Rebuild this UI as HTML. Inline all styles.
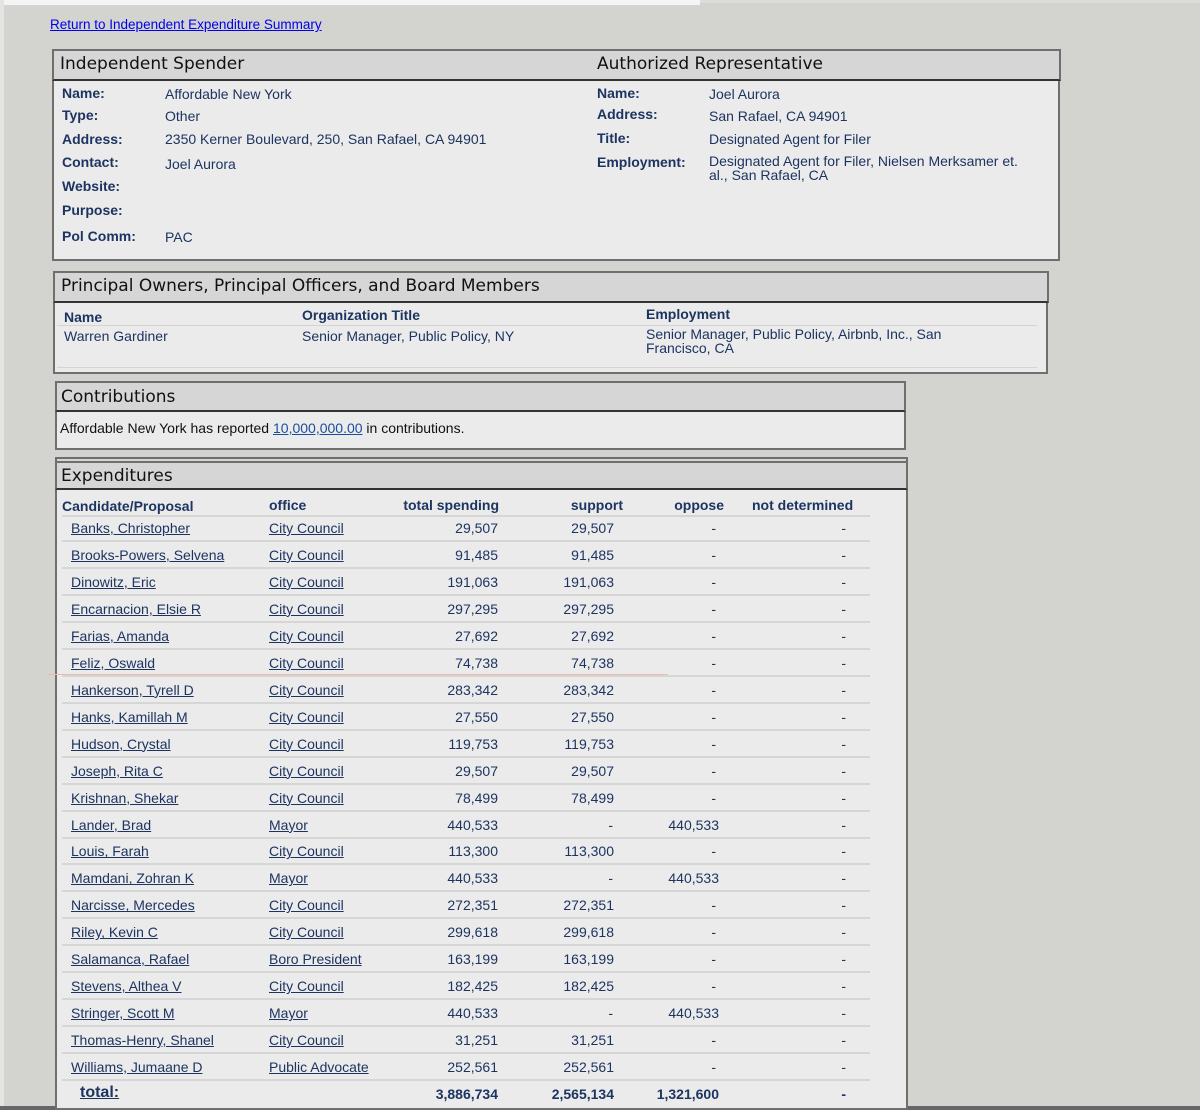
<!DOCTYPE html>
<html><head><meta charset="utf-8">
<style>
*{margin:0;padding:0;box-sizing:border-box}
body{width:1200px;height:1110px;background:#d3d3cf;position:relative;overflow:hidden;font-family:"Liberation Sans",Arial,sans-serif;font-size:14px;color:#1d3461}
.a{position:absolute;white-space:nowrap;line-height:16px}
.b{font-weight:bold}
.panel{position:absolute;background:#ebebeb;border:2px solid #6f6f6f;border-top:none}
.hd{position:absolute;background:#d6d6d6;border:2px solid #6f6f6f;border-bottom:2px solid #333;font-family:"DejaVu Sans",Verdana,sans-serif;font-size:17px;color:#111;padding-left:6px;line-height:27px}
a,u{color:#1d3461;text-decoration:underline}
.ln{position:absolute;left:62px;width:808px;height:2px;background:#d6d6d6}
.r{text-align:right}
</style></head><body>
<div style="position:absolute;left:0;top:0;width:1200px;height:3px;background:#dcdcdc"></div>
<div style="position:absolute;left:0;top:0;width:700px;height:5px;background:#f4f4f4"></div>
<div style="position:absolute;left:0;top:0;width:4px;height:1110px;background:#e4e4e2"></div>
<div style="position:absolute;left:0;top:1106px;width:1200px;height:4px;background:#666"></div>

<div class="a" style="left:50px;top:17px;font-size:13.5px"><a style="color:#0000ee">Return to Independent Expenditure Summary</a></div>

<!-- Panel 1 -->
<div class="panel" style="left:52px;top:79px;width:1008px;height:182px"></div>
<div class="hd" style="left:52px;top:49px;width:1009px;height:32px">Independent Spender<span style="position:absolute;left:543px">Authorized Representative</span></div>
<div class="a b" style="left:62px;top:85px">Name:</div><div class="a" style="left:165px;top:86px">Affordable New York</div>
<div class="a b" style="left:62px;top:107px">Type:</div><div class="a" style="left:165px;top:108px">Other</div>
<div class="a b" style="left:62px;top:131px">Address:</div><div class="a" style="left:165px;top:131px">2350 Kerner Boulevard, 250, San Rafael, CA 94901</div>
<div class="a b" style="left:62px;top:154px">Contact:</div><div class="a" style="left:165px;top:156px">Joel Aurora</div>
<div class="a b" style="left:62px;top:178px">Website:</div>
<div class="a b" style="left:62px;top:202px">Purpose:</div>
<div class="a b" style="left:62px;top:228px">Pol Comm:</div><div class="a" style="left:165px;top:229px">PAC</div>
<div class="a b" style="left:597px;top:85px">Name:</div><div class="a" style="left:709px;top:86px">Joel Aurora</div>
<div class="a b" style="left:597px;top:106px">Address:</div><div class="a" style="left:709px;top:108px">San Rafael, CA 94901</div>
<div class="a b" style="left:597px;top:130px">Title:</div><div class="a" style="left:709px;top:131px">Designated Agent for Filer</div>
<div class="a b" style="left:597px;top:154px">Employment:</div><div class="a" style="left:709px;top:154px;line-height:14px">Designated Agent for Filer, Nielsen Merksamer et.<br>al., San Rafael, CA</div>

<!-- Panel 2 -->
<div class="panel" style="left:53px;top:301px;width:995px;height:73px"></div>
<div class="hd" style="left:53px;top:271px;width:996px;height:32px">Principal Owners, Principal Officers, and Board Members</div>
<div class="a b" style="left:64px;top:309px">Name</div>
<div class="a b" style="left:302px;top:307px">Organization Title</div>
<div class="a b" style="left:646px;top:306px">Employment</div>
<div style="position:absolute;left:57px;top:325px;width:980px;height:1px;background:#d4d4d4"></div>
<div class="a" style="left:64px;top:328px">Warren Gardiner</div>
<div class="a" style="left:302px;top:328px">Senior Manager, Public Policy, NY</div>
<div class="a" style="left:646px;top:327px;line-height:14px">Senior Manager, Public Policy, Airbnb, Inc., San<br>Francisco, CA</div>
<div style="position:absolute;left:57px;top:367px;width:980px;height:1px;background:#d4d4d4"></div>

<!-- Panel 3 -->
<div class="panel" style="left:55px;top:410px;width:851px;height:40px"></div>
<div class="hd" style="left:55px;top:381px;width:851px;height:31px;padding-left:4px;line-height:28px">Contributions</div>
<div class="a" style="left:60px;top:420px;color:#111">Affordable New York has reported <a style="color:#1a4f9c">10,000,000.00</a> in contributions.</div>

<!-- Panel 4 -->
<div class="panel" style="left:55px;top:488px;width:853px;height:622px"></div>
<div style="position:absolute;left:55px;top:457px;width:853px;height:5px;border:2px solid #6f6f6f;border-bottom:none;background:#d6d6d6"></div>
<div class="hd" style="left:55px;top:461px;width:853px;height:29px;padding-left:4px;line-height:26px">Expenditures</div>
<div class="a b" style="left:62px;top:498px">Candidate/Proposal</div>
<div class="a b" style="left:269px;top:497px">office</div>
<div class="a b r" style="left:380px;width:119px;top:497px">total spending</div>
<div class="a b r" style="left:520px;width:103px;top:497px">support</div>
<div class="a b r" style="left:640px;width:84px;top:497px">oppose</div>
<div class="a b" style="left:752px;top:497px">not determined</div>
<div class="ln" style="top:515px"></div>

<div id="rows"></div>
<script>
var d=[["Banks, Christopher","City Council","29,507","29,507","-"],
["Brooks-Powers, Selvena","City Council","91,485","91,485","-"],
["Dinowitz, Eric","City Council","191,063","191,063","-"],
["Encarnacion, Elsie R","City Council","297,295","297,295","-"],
["Farias, Amanda","City Council","27,692","27,692","-"],
["Feliz, Oswald","City Council","74,738","74,738","-"],
["Hankerson, Tyrell D","City Council","283,342","283,342","-"],
["Hanks, Kamillah M","City Council","27,550","27,550","-"],
["Hudson, Crystal","City Council","119,753","119,753","-"],
["Joseph, Rita C","City Council","29,507","29,507","-"],
["Krishnan, Shekar","City Council","78,499","78,499","-"],
["Lander, Brad","Mayor","440,533","-","440,533"],
["Louis, Farah","City Council","113,300","113,300","-"],
["Mamdani, Zohran K","Mayor","440,533","-","440,533"],
["Narcisse, Mercedes","City Council","272,351","272,351","-"],
["Riley, Kevin C","City Council","299,618","299,618","-"],
["Salamanca, Rafael","Boro President","163,199","163,199","-"],
["Stevens, Althea V","City Council","182,425","182,425","-"],
["Stringer, Scott M","Mayor","440,533","-","440,533"],
["Thomas-Henry, Shanel","City Council","31,251","31,251","-"],
["Williams, Jumaane D","Public Advocate","252,561","252,561","-"]];
var h="";
for(var i=0;i<d.length;i++){var c=528+i*26.95;var t=(c-8).toFixed(1);var r=d[i];
var ow=r[4]=="-"?716:719;
h+='<div class="a" style="left:71px;top:'+t+'px"><u>'+r[0]+'</u></div>';
h+='<div class="a" style="left:269px;top:'+t+'px"><u>'+r[1]+'</u></div>';
h+='<div class="a r" style="left:398px;width:100px;top:'+t+'px">'+r[2]+'</div>';
h+='<div class="a r" style="left:'+(r[3]=="-"?513:514)+'px;width:100px;top:'+t+'px">'+r[3]+'</div>';
h+='<div class="a r" style="left:'+(ow-100)+'px;width:100px;top:'+t+'px">'+r[4]+'</div>';
h+='<div class="a r" style="left:746px;width:100px;top:'+t+'px">-</div>';
h+='<div class="ln" style="top:'+(c+12).toFixed(1)+'px"></div>';}
document.getElementById("rows").innerHTML=h;
</script>
<div style="position:absolute;left:48px;top:674px;width:620px;height:1px;background:#f2b8a8"></div>
<div class="a b" style="left:80px;top:1085px;font-size:16px"><u>total:</u></div>
<div class="a b r" style="left:398px;width:100px;top:1086px">3,886,734</div>
<div class="a b r" style="left:514px;width:100px;top:1086px">2,565,134</div>
<div class="a b r" style="left:619px;width:100px;top:1086px">1,321,600</div>
<div class="a b r" style="left:746px;width:100px;top:1086px">-</div>
</body></html>
